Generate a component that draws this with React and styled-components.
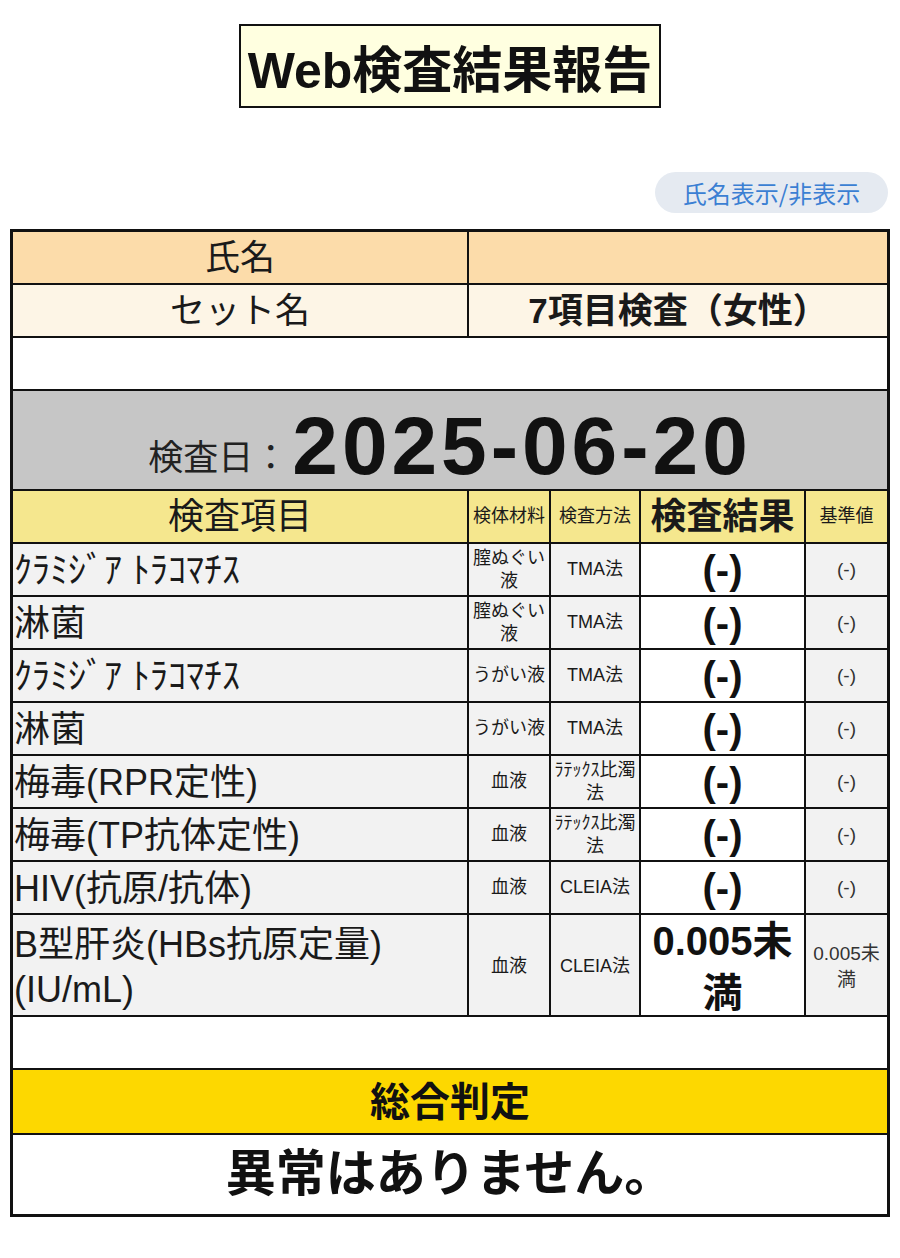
import React from "react";
import styled, { createGlobalStyle } from "styled-components";

const GlobalStyle = createGlobalStyle`
  html, body { margin: 0; padding: 0; background: #ffffff; }
  body {
    font-family: "Liberation Sans", "Noto Sans CJK JP", sans-serif;
    color: #1a1a1a;
  }
  * { box-sizing: border-box; }
`;

const Page = styled.div`
  width: 900px;
  padding: 24px 10px 40px 10px;
  display: flex;
  flex-direction: column;
  align-items: stretch;
`;

const TitleWrap = styled.div`
  display: flex;
  justify-content: center;
`;

const TitleBox = styled.h1`
  margin: 0;
  width: 422px;
  height: 84px;
  border: 2px solid #111;
  background: #ffffe0;
  display: flex;
  align-items: center;
  justify-content: center;
  font-family: "Liberation Sans", "Noto Sans CJK JP", sans-serif;
  font-weight: 700;
  font-size: 50px;
  color: #111;
`;

const ToggleRow = styled.div`
  display: flex;
  justify-content: flex-end;
  margin-top: 64px;
  margin-bottom: 16px;
  padding-right: 2px;
`;

const ToggleButton = styled.button`
  width: 233px;
  height: 41px;
  border: none;
  border-radius: 21px;
  background: #e5eaf1;
  color: #3b7fd3;
  font-family: "Noto Sans CJK JP", sans-serif;
  font-size: 24px;
  padding: 0;
  cursor: pointer;
`;

const Table = styled.div`
  width: 880px;
  border: 3px solid #111;
  display: flex;
  flex-direction: column;
`;

const layouts = {
  full: "1fr",
  pair: "454px 420px",
  five: "454px 82px 90px 165px 83px",
};

const Row = styled.div`
  display: grid;
  grid-template-columns: ${(p) => layouts[p.$layout || "full"]};
  height: ${(p) => p.$h}px;
  background: ${(p) => p.$bg || "#ffffff"};
  border-top: 2px solid #111;
  &:first-child { border-top: none; }
`;

const Cell = styled.div`
  display: flex;
  align-items: center;
  justify-content: ${(p) => (p.$left ? "flex-start" : "center")};
  text-align: ${(p) => (p.$left ? "left" : "center")};
  padding: ${(p) => p.$pad || "0 4px"};
  background: ${(p) => p.$bg || "transparent"};
  font-size: ${(p) => p.$size || 30}px;
  font-weight: ${(p) => (p.$bold ? 700 : 400)};
  line-height: ${(p) => p.$lh || 1.25};
  color: ${(p) => p.$color || "#1a1a1a"};
  border-left: 2px solid #111;
  &:first-child { border-left: none; }
`;

const DateCell = styled(Cell)`
  padding-top: 4px;
`;

const DateLabel = styled.span`
  font-family: "Noto Sans CJK JP", sans-serif;
  font-size: 35px;
  color: #222;
  margin-top: 18px;
  margin-right: 4px;
`;

const DateValue = styled.span`
  font-family: "Liberation Sans", sans-serif;
  font-weight: 700;
  font-size: 82px;
  letter-spacing: 4px;
  color: #111;
`;

const rows = [
  { name: "ｸﾗﾐｼﾞｱ ﾄﾗｺﾏﾁｽ", mat: "膣ぬぐい液", method: "TMA法", result: "(-)", ref: "(-)" },
  { name: "淋菌", mat: "膣ぬぐい液", method: "TMA法", result: "(-)", ref: "(-)" },
  { name: "ｸﾗﾐｼﾞｱ ﾄﾗｺﾏﾁｽ", mat: "うがい液", method: "TMA法", result: "(-)", ref: "(-)" },
  { name: "淋菌", mat: "うがい液", method: "TMA法", result: "(-)", ref: "(-)" },
  { name: "梅毒(RPR定性)", mat: "血液", method: "ﾗﾃｯｸｽ比濁法", result: "(-)", ref: "(-)" },
  { name: "梅毒(TP抗体定性)", mat: "血液", method: "ﾗﾃｯｸｽ比濁法", result: "(-)", ref: "(-)" },
  { name: "HIV(抗原/抗体)", mat: "血液", method: "CLEIA法", result: "(-)", ref: "(-)" },
  { name: ["B型肝炎(HBs抗原定量)", "(IU/mL)"], mat: "血液", method: "CLEIA法", result: "0.005未満", ref: "0.005未満", tall: true },
];

const DATA_BG = "#f2f2f2";

export default function App() {
  return (
    <>
      <GlobalStyle />
      <Page>
        <TitleWrap>
          <TitleBox>Web検査結果報告</TitleBox>
        </TitleWrap>
        <ToggleRow>
          <ToggleButton type="button">氏名表示/非表示</ToggleButton>
        </ToggleRow>
        <Table>
          <Row $layout="pair" $h={51} $bg="#fcdcaa">
            <Cell $size={35}>氏名</Cell>
            <Cell $size={35}></Cell>
          </Row>
          <Row $layout="pair" $h={53} $bg="#fdf5e6">
            <Cell $size={35}>セット名</Cell>
            <Cell $size={35} $bold>7項目検査（女性）</Cell>
          </Row>
          <Row $h={53} />
          <Row $h={100} $bg="#c6c6c6">
            <DateCell>
              <DateLabel>検査日：</DateLabel>
              <DateValue>2025-06-20</DateValue>
            </DateCell>
          </Row>
          <Row $layout="five" $h={53} $bg="#f5e78e">
            <Cell $size={36}>検査項目</Cell>
            <Cell $size={18} $pad="0 1px">検体材料</Cell>
            <Cell $size={18} $pad="0 1px">検査方法</Cell>
            <Cell $size={36} $bold>検査結果</Cell>
            <Cell $size={18}>基準値</Cell>
          </Row>
          {rows.map((r, i) => (
            <Row key={i} $layout="five" $h={r.tall ? 102 : 53} $bg={DATA_BG}>
              <Cell $left $size={36} $pad="0 1px" $lh={1.25}>
                {Array.isArray(r.name) ? (
                  <span>{r.name[0]}<br />{r.name[1]}</span>
                ) : r.name}
              </Cell>
              <Cell $size={18} $pad="0 3px" $lh={1.3}>{r.mat}</Cell>
              <Cell $size={18} $pad="0 2px" $lh={1.3}>{r.method}</Cell>
              <Cell $size={40} $bold $bg="#ffffff" $pad="0 6px" $lh={1.3} $color="#111">{r.result}</Cell>
              <Cell $size={19} $pad="0 3px" $lh={1.35} $color="#333">{r.ref}</Cell>
            </Row>
          ))}
          <Row $h={53} />
          <Row $h={65} $bg="#fdd800">
            <Cell $size={40} $bold $color="#111">総合判定</Cell>
          </Row>
          <Row $h={81}>
            <Cell $size={50} $bold $color="#111">異常はありません。</Cell>
          </Row>
        </Table>
      </Page>
    </>
  );
}
